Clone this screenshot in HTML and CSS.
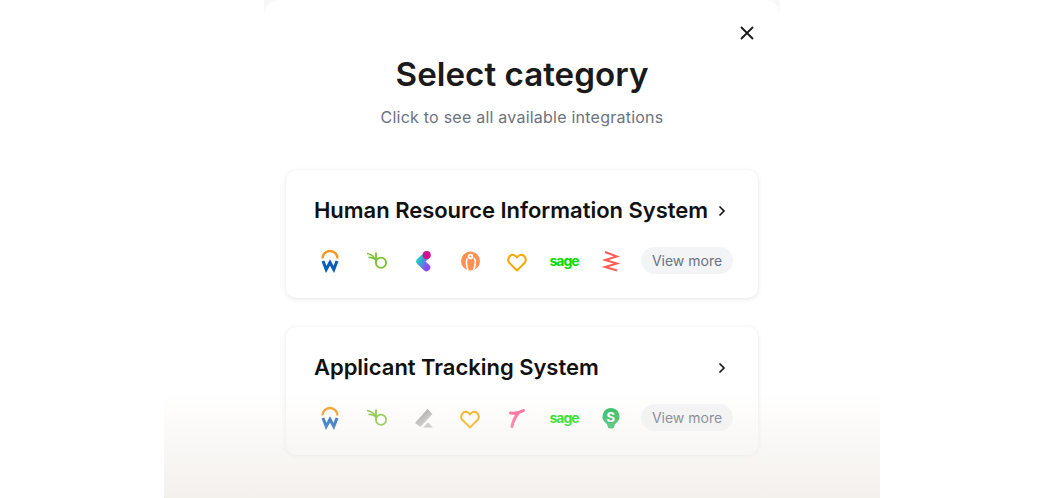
FILE: index.html
```html
<!DOCTYPE html>
<html lang="en">
<head>
    <meta charset="UTF-8">
    <meta name="viewport" content="width=device-width, initial-scale=1.0">
    <title>Select category</title>
    <link rel="stylesheet" href="styles.css">
</head>
<body>
    <div class="stage">
        <div class="modal-frame">
            <div class="modal">
                <button class="close-button" aria-label="Close">
                    <svg width="16" height="16" viewBox="0 0 16 16"><path d="M2 2l12 12M14 2L2 14" stroke="#1a1a1a" stroke-width="1.800" fill="none"/></svg>
                </button>
                <h1>Select category</h1>
                <p class="subtitle">Click to see all available integrations</p>

                <div class="card">
                    <div class="card-head">
                        <h2>Human Resource Information System</h2>
                        <svg class="chevron" width="10" height="12" viewBox="0 0 10 12"><path d="M2.500 1.500L7 6l-4.500 4.500" stroke="#111" stroke-width="1.600" fill="none"/></svg>
                    </div>
                    <div class="logos">
                        <div class="logo-list">
                            <svg class="logo" viewBox="0 0 24 24"><path d="M4.500 9.500a7.500 7.500 0 0 1 15 0" stroke="#f5981f" stroke-width="2.400" fill="none"/><path d="M5 12l3.200 8.500L12 13.500l3.800 7L19 12" stroke="#0a5cb8" stroke-width="3" fill="none"/></svg>
                            <svg class="logo" viewBox="0 0 24 24"><circle cx="16" cy="13.700" r="5.100" stroke="#7ac231" stroke-width="1.800" fill="none"/><path d="M11 3.500v10.200" stroke="#7ac231" stroke-width="1.800" fill="none"/><path d="M2 4.500c4 .5 7 3 9 6.500M3.500 8.500c2.500-.5 5 .5 7.500 2.500" stroke="#7ac231" stroke-width="1.500" fill="none"/></svg>
                            <svg class="logo" viewBox="0 0 24 24">
                                <defs><linearGradient id="kf" x1="0" y1="0" x2="1" y2="1"><stop offset="0" stop-color="#19d0c8"/><stop offset="1" stop-color="#8b4df0"/></linearGradient></defs>
                                <path d="M14.500 6.500L8 12.500l6.500 6" stroke="url(#kf)" stroke-width="7.500" stroke-linecap="round" stroke-linejoin="round" fill="none"/>
                                <circle cx="14.700" cy="6" r="4" fill="#d4108f"/>
                            </svg>
                            <svg class="logo" viewBox="0 0 24 24"><circle cx="12.500" cy="12" r="9.500" fill="#ff9152"/><circle cx="12.500" cy="7.500" r="2.800" fill="#fff"/><circle cx="12.500" cy="7.500" r="1" fill="#ff9152"/><path d="M9 9.500C8 13 8.500 17 10 21.500M16 9c1.800 2 1.800 7-.5 12" stroke="#fff" stroke-width="1.600" fill="none"/></svg>
                            <svg class="logo" viewBox="0 0 24 24"><path d="M12 21.500L4.500 14C1 10 5.500 4 10 6.500c1 .6 1.600 1.300 2 2 .4-.7 1-1.400 2-2 4.500-2.500 9 3.500 5.500 7.500z" stroke="#f5a800" stroke-width="2" fill="none" stroke-linejoin="round"/></svg>
                            <span class="sage">sage</span>
                            <svg class="logo" viewBox="0 0 24 24"><path d="M6 3l12 4.500L6 11l12 3.500L6 18l12 3.500" stroke="#ff5a52" stroke-width="1.900" fill="none"/></svg>
                        </div>
                        <span class="view-more">View more</span>
                    </div>
                </div>

                <div class="card">
                    <div class="card-head">
                        <h2>Applicant Tracking System</h2>
                        <svg class="chevron" width="10" height="12" viewBox="0 0 10 12"><path d="M2.500 1.500L7 6l-4.500 4.500" stroke="#111" stroke-width="1.600" fill="none"/></svg>
                    </div>
                    <div class="logos">
                        <div class="logo-list">
                            <svg class="logo" viewBox="0 0 24 24"><path d="M4.500 9.500a7.500 7.500 0 0 1 15 0" stroke="#f5981f" stroke-width="2.400" fill="none"/><path d="M5 12l3.200 8.500L12 13.500l3.800 7L19 12" stroke="#0a5cb8" stroke-width="3" fill="none"/></svg>
                            <svg class="logo" viewBox="0 0 24 24"><circle cx="16" cy="13.700" r="5.100" stroke="#7ac231" stroke-width="1.800" fill="none"/><path d="M11 3.500v10.200" stroke="#7ac231" stroke-width="1.800" fill="none"/><path d="M2 4.500c4 .5 7 3 9 6.500M3.500 8.500c2.500-.5 5 .5 7.500 2.500" stroke="#7ac231" stroke-width="1.500" fill="none"/></svg>
                            <svg class="logo" viewBox="0 0 24 24">
                                <defs><linearGradient id="pen" x1="0" y1="0" x2="1" y2="1"><stop offset="0" stop-color="#8c8c8c"/><stop offset="1" stop-color="#dcdcdc"/></linearGradient></defs>
                                <path d="M3 17L15.500 3 20.500 8 8.500 21z" fill="url(#pen)"/>
                                <path d="M11 21.500l5-5 5 5z" fill="#bdbdbd"/>
                            </svg>
                            <svg class="logo" viewBox="0 0 24 24"><path d="M12 21.500L4.500 14C1 10 5.500 4 10 6.500c1 .6 1.600 1.300 2 2 .4-.7 1-1.400 2-2 4.500-2.500 9 3.500 5.500 7.500z" stroke="#f5a800" stroke-width="2" fill="none" stroke-linejoin="round"/></svg>
                            <svg class="logo" viewBox="0 0 24 24"><path d="M5.500 7c4 .5 9 0 13-2.500M13.500 6.500C10.500 10.500 8 15 7 20.500" stroke="#ff5f93" stroke-width="3" stroke-linecap="round" fill="none"/></svg>
                            <span class="sage">sage</span>
                            <span class="bulb">
                                <svg class="logo" viewBox="0 0 24 24"><path d="M12 2a8.500 8.500 0 0 0-5 15.300c1.200 1 1.500 2 1.700 3.200.2 1.200 1 2 2 2h2.600c1 0 1.800-.8 2-2 .2-1.200.5-2.200 1.700-3.200A8.500 8.500 0 0 0 12 2z" fill="#1db954"/></svg>
                                <span class="bulb-letter">S</span>
                            </span>
                        </div>
                        <span class="view-more">View more</span>
                    </div>
                </div>
            </div>
        </div>
        <div class="fade"></div>
    </div>
</body>
</html>
```

FILE: styles.css
```css
html, body {
    margin: 0;
    height: 100%;
    background-color: #fff;
}
body {
    font-family: Inter, "Liberation Sans", sans-serif;
    overflow: hidden;
}
.stage {
    position: relative;
    width: 716px;
    height: 498px;
    margin: 0 auto;
    display: flex;
    justify-content: center;
    overflow: hidden;
}
.modal-frame {
    width: 516px;
    height: 498px;
    background-color: #f8f8f8;
}
.modal {
    position: relative;
    height: 100%;
    box-sizing: border-box;
    padding: 52px 22px 0;
    background-color: #fff;
    border-radius: 16px 16px 0 0;
}
.close-button {
    position: absolute;
    top: 25px;
    right: 25px;
    width: 16px;
    height: 16px;
    padding: 0;
    border: none;
    background: none;
    cursor: pointer;
}
.close-button svg {
    display: block;
}
h1 {
    margin: 0;
    font-size: 33.2px;
    line-height: 44px;
    font-weight: 600;
    color: #1a1a1a;
    text-align: center;
}
.subtitle {
    margin: 9px 0 41px;
    font-size: 16px;
    line-height: 24px;
    letter-spacing: 0.23px;
    color: #6b7280;
    text-align: center;
}
.card {
    height: 128px;
    box-sizing: border-box;
    margin-bottom: 29px;
    padding: 24px 25px 0 28px;
    background-color: #fff;
    border-radius: 10px;
    box-shadow: 0 1px 5px rgba(0, 0, 0, 0.11);
}
.card-head {
    display: flex;
    justify-content: space-between;
    align-items: center;
    padding-right: 6px;
}
.chevron {
    margin-top: 2px;
}
h2 {
    margin: 0;
    font-size: 22px;
    line-height: 32px;
    font-weight: 600;
    letter-spacing: -0.03px;
    color: #111;
}
.logos {
    display: flex;
    align-items: center;
    justify-content: space-between;
    margin-top: 21px;
    margin-left: 4px;
}
.logo-list {
    display: flex;
    align-items: center;
    gap: 22.8px;
}
.logo {
    display: block;
    width: 24px;
    height: 24px;
    flex: none;
}
.sage {
    width: 24px;
    display: flex;
    justify-content: center;
    font-size: 14px;
    font-weight: 700;
    letter-spacing: -1px;
    color: #00dc00;
}
.bulb {
    position: relative;
    width: 24px;
    height: 24px;
    flex: none;
}
.bulb-letter {
    position: absolute;
    top: 2px;
    left: 0;
    width: 24px;
    text-align: center;
    font-size: 13px;
    line-height: 18px;
    font-weight: 700;
    color: #fff;
}
.view-more {
    flex: none;
    width: 92px;
    height: 27px;
    background-color: #f3f4f6;
    border-radius: 14px;
    font-size: 14px;
    line-height: 27px;
    text-align: center;
    color: #6b7280;
}
.fade {
    position: absolute;
    left: 0;
    right: 0;
    bottom: 0;
    height: 105px;
    background: linear-gradient(to bottom, rgba(244, 240, 236, 0), rgba(244, 240, 236, 1));
}
```
